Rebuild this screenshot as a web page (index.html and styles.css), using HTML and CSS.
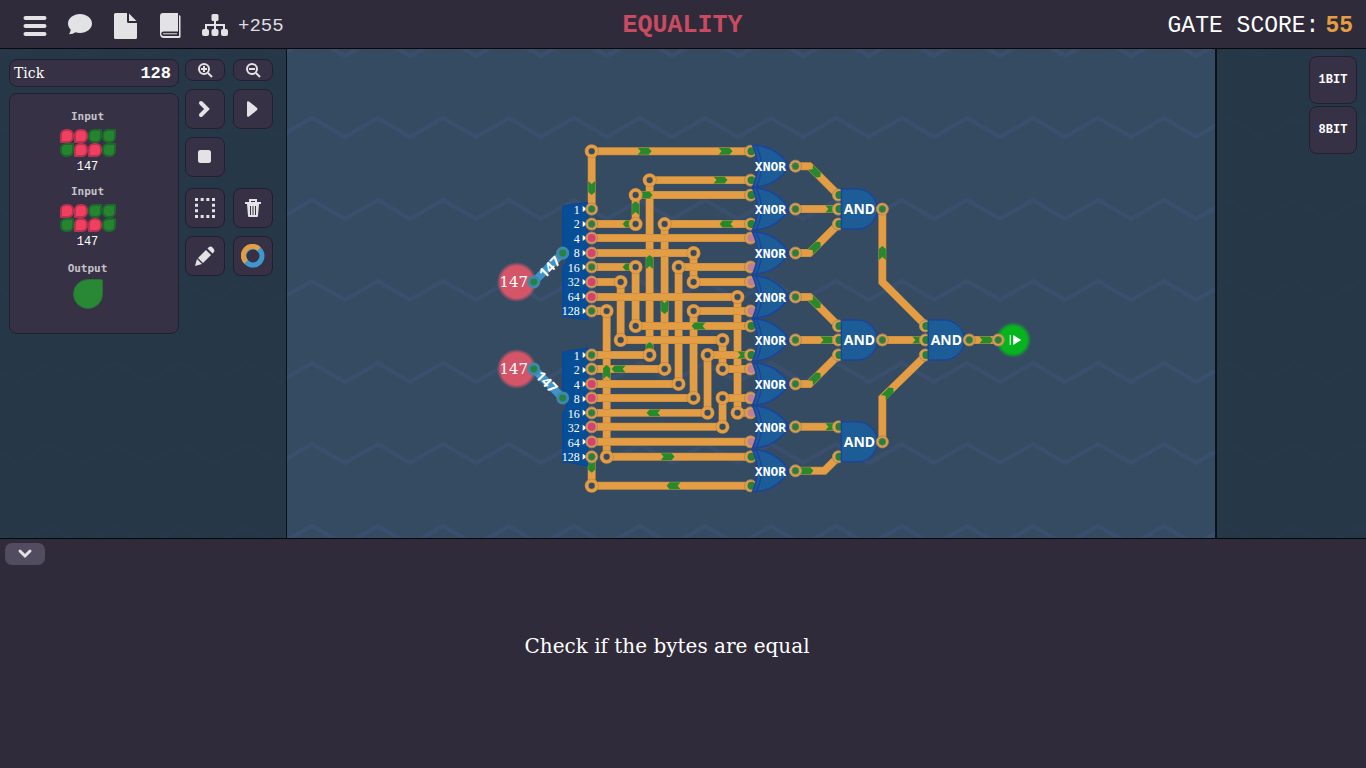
FILE: index.html
```html
<!DOCTYPE html>
<html lang="en">
<head>
<meta charset="utf-8">
<title>Equality</title>
<link rel="stylesheet" href="styles.css">
</head>
<body>
<header class="topbar">
  <nav class="menu" aria-label="Main">
    <button class="menu-btn" aria-label="Menu"><svg width="26" height="28" viewBox="0 0 26 28"><path d="M3.500 6h19M3.500 14h19M3.500 22h19" stroke="currentColor" stroke-width="4" stroke-linecap="round"/></svg></button>
    <button class="menu-btn" aria-label="Comments"><svg width="26" height="28" viewBox="0 0 26 28"><path d="M13 2C6.400 2 1 6.300 1 11.500c0 2.300 1 4.300 2.700 6-.2 2-1 3.700-1.700 4.700 2.800 0 5-1 6.400-2 1.400.5 3 .8 4.600.8 6.600 0 12-4.300 12-9.500S19.600 2 13 2Z" fill="currentColor"/></svg></button>
    <button class="menu-btn" aria-label="New file"><svg width="26" height="28" viewBox="0 0 26 28"><path d="M2 2.500A1.500 1.500 0 0 1 3.500 1H15v8.500a1.500 1.500 0 0 0 1.500 1.500H25v14.500a1.500 1.500 0 0 1-1.500 1.500h-20A1.500 1.500 0 0 1 2 25.500ZM17 1.500 24.500 9H17Z" fill="currentColor"/></svg></button>
    <button class="menu-btn" aria-label="Manual"><svg width="26" height="28" viewBox="0 0 26 28"><path d="M6 1h15v18.500H6.500c-3 0-3 4.500 0 4.500H22V3l1.500 1v21.500L22 26H7c-3 0-4-2-4-4V4c0-2 1-3 3-3Z" fill="currentColor"/><path d="M6 21.800h14" stroke="currentColor"/></svg></button>
    <button class="menu-btn" aria-label="Components"><svg width="26" height="28" viewBox="0 0 26 28"><g fill="currentColor"><rect x="9.500" y="2" width="7" height="7" rx="1.500"/><rect x="0" y="17" width="7" height="7" rx="2"/><rect x="9.500" y="17" width="7" height="7" rx="2"/><rect x="19" y="17" width="7" height="7" rx="2"/></g><path d="M13 8v9M4 17v-4h18v4" fill="none" stroke="currentColor" stroke-width="2"/></svg></button>
    <span class="gain">+255</span>
  </nav>
  <h1 class="level">EQUALITY</h1>
  <p class="score">GATE SCORE:<strong>55</strong></p>
</header>

<main class="workspace">
  <svg class="waves" aria-hidden="true">
    <defs>
      <pattern id="zigzag" width="131" height="163" patternUnits="userSpaceOnUse" patternTransform="translate(50 56)">
        <path d="M-33 32 0 13 33 32 66 13 98 32 131 13 164 32M-33 114 0 95 33 114 66 95 98 114 131 95 164 114" fill="none" stroke="#394f6d" stroke-width="4"/>
      </pattern>
    </defs>
    <rect width="100%" height="100%" fill="url(#zigzag)"/>
  </svg>

  <aside class="side left">
    <div class="status">
      <div class="card tick"><span>Tick</span><output class="tick-value">128</output></div>
      <div class="card signals">
        <section class="signal">
          <h2>Input</h2>
          <div class="byte"><i class="on"></i><i class="on"></i><i></i><i></i><i></i><i class="on"></i><i class="on"></i><i></i></div>
          <p>147</p>
        </section>
        <section class="signal">
          <h2>Input</h2>
          <div class="byte"><i class="on"></i><i class="on"></i><i></i><i></i><i></i><i class="on"></i><i class="on"></i><i></i></div>
          <p>147</p>
        </section>
        <section class="signal out">
          <h2>Output</h2>
          <div class="drop"></div>
        </section>
      </div>
    </div>
    <div class="tools">
      <button class="card tool short" aria-label="Zoom in"><svg width="16" height="16" viewBox="0 0 16 16" fill="none" stroke="currentColor" stroke-width="2"><circle cx="7" cy="7" r="5"/><path d="m11 11 4 4M7 4v6M4 7h6"/></svg></button>
      <button class="card tool short" aria-label="Zoom out"><svg width="16" height="16" viewBox="0 0 16 16" fill="none" stroke="currentColor" stroke-width="2"><circle cx="7" cy="7" r="5"/><path d="m11 11 4 4M4 7h6"/></svg></button>
      <button class="card tool" aria-label="Step"><svg width="24" height="24" viewBox="0 0 24 24"><path d="m8 6 6 6-6 6" fill="none" stroke="currentColor" stroke-width="4" stroke-linecap="round"/></svg></button>
      <button class="card tool" aria-label="Run"><svg width="24" height="24" viewBox="0 0 24 24"><path d="M6 5.500Q6 3.500 8 4.500l7.500 6q2 1.500 0 3L8 19.500q-2 1-2-1Z" fill="currentColor"/></svg></button>
      <button class="card tool" aria-label="Stop"><svg width="24" height="24" viewBox="0 0 24 24"><rect x="5" y="5" width="13" height="13" rx="2.500" fill="currentColor"/></svg></button>
      <button class="card tool second" aria-label="Select area"><svg width="24" height="24" viewBox="0 0 24 24"><path d="M2 3.500h20M2 20.500h20M3.500 2v20M20.500 2v20" fill="none" stroke="currentColor" stroke-width="3" stroke-dasharray="3 2.670"/></svg></button>
      <button class="card tool third" aria-label="Delete"><svg width="24" height="24" viewBox="0 0 24 24"><path d="M9 6V4h6v2M4 7h16" fill="none" stroke="currentColor" stroke-width="2"/><path d="M6 8h12l-1 12q0 1-1 1H8q-1 0-1-1Z" fill="currentColor"/><path d="M9.500 10v9M12 10v9M14.500 10v9" stroke="#363144"/></svg></button>
      <button class="card tool" aria-label="Draw"><svg width="24" height="24" viewBox="0 0 24 24" fill="currentColor"><path d="M2 22 4 15l5 5Z"/><path d="m5 14 8-8 5 5-8 8Z"/><path d="m14.500 4.500 1-1q2-2 4.500.5t.5 4.500l-1 1Z"/></svg></button>
      <button class="card tool" aria-label="Wire colour"><svg width="24" height="24" viewBox="0 0 24 24" fill="none" stroke-width="5"><circle cx="12" cy="12" r="9" stroke="#3f97cf"/><path d="M5 18A9 9 0 0 1 18 5" stroke="#e39e45"/></svg></button>
    </div>
  </aside>

  <div class="board">
    <svg class="circuit" viewBox="-305 -102 929 489" role="img" aria-label="Equality circuit">
      <defs>
        <g id="joint"><circle r="5" fill="#344b62" stroke="#b98142" stroke-width="4"/><circle r="5" fill="none" stroke="#e39e45" stroke-width="3"/></g>
        <g id="low"><circle r="6" fill="#e39e45" stroke="#a58a60"/><circle r="3.500" fill="#2b7d3b" stroke="#6a8056"/></g>
        <g id="high"><circle r="6" fill="#dc9560" stroke="#a58a60"/><circle r="4" fill="#d4436b"/></g>
        <g id="in-low"><circle r="6" fill="#e39e45" stroke="#a58a60"/><circle cx="1" r="4" fill="#2b7d3b"/></g>
        <g id="in-high"><circle r="6" fill="#e39e45" stroke="#a58a60"/><circle cx="1" r="4" fill="#bd7f98"/></g>
        <path id="pulse" d="M-7-3.500-4 0-7 3.500H4L7 0 4-3.500H-7Z" fill="#268a2d"/>
        <g id="xnor" stroke="#1b449c" stroke-width="1.500">
          <path d="M161-21q23 0 37 21q-14 21-37 21 10-21 0-42Z" fill="#1c5d98"/>
          <path d="M165-20q10 20 0 40" fill="none"/>
          <circle cx="198" r="3" fill="#1b449c"/>
        </g>
        <path id="and" d="M250-20h16a20 20 0 0 1 0 40h-16Z" fill="#1c5d98" stroke="#1b449c" stroke-width="1.500"/>
        <g id="splitter">
          <path d="M-29-3-4-7V111L-29 107V58q4-4 4-10t-4-10Z" fill="#064f96" stroke="#0a43a5"/>
          <path d="M-9-3v6l4-3ZM-9 12v6l4-3ZM-9 26v6l4-3ZM-9 41v6l4-3ZM-9 55v6l4-3ZM-9 70v6l4-3ZM-9 84v6l4-3ZM-9 99v6l4-3Z" fill="#fff"/>
          <g class="pin">
            <text x="-12" y="5">1</text><text x="-12" y="19">2</text><text x="-12" y="34">4</text><text x="-12" y="48">8</text><text x="-12" y="63">16</text><text x="-12" y="77">32</text><text x="-12" y="92">64</text><text x="-12" y="106">128</text>
          </g>
        </g>
        <radialGradient id="glow-red"><stop offset=".8" stop-color="#d45568"/><stop offset="1" stop-color="#d45568" stop-opacity="0"/></radialGradient>
        <radialGradient id="glow-green"><stop offset=".75" stop-color="#06b51d"/><stop offset="1" stop-color="#06b51d" stop-opacity="0"/></radialGradient>
        <path id="down" d="M0 58V0M44 73V44M102 102V131M44 116V175M29 131V189M131 189V218M146 146V262M15 160V306M58 204V29M73 218V73M87 233V116M102 247V160M116 262V204M131 276V247M0 306V335"/>
        <path id="across" d="M0 0H160M0 73H44M44 44H160M0 87H160M0 102H102M102 131H160M0 116H44M44 175H160M0 131H29M29 189H131M131 218H160M0 146H146M146 262H160M0 160H15M15 306H160M0 204H58M58 29H160M0 218H73M73 73H160M0 233H87M87 116H160M0 247H102M102 160H160M0 262H116M116 204H160M0 276H131M131 247H160M0 291H160M0 335H160"/>
        <path id="outputs" d="M204 15H218L247 44M204 58H247M204 102H218L247 73M204 146H218L247 175M204 189H247M204 233H218L247 204M204 276H247M204 320H233L247 306M291 58V131L335 175M291 189H335M291 291V247L335 204M378 189H407"/>
      </defs>

      <!-- wires: each layer has a darker casing under it -->
      <g fill="none">
        <use href="#down" class="casing"/><use href="#down" class="wire"/>
        <use href="#across" class="casing"/><use href="#across" class="wire"/>
        <use href="#outputs" class="casing"/><use href="#outputs" class="wire"/>
      </g>

      <!-- signal pulses -->
      <use href="#pulse" x="53"/><use href="#pulse" x="134"/><use href="#pulse" x="129" y="29"/><use href="#pulse" x="54" y="44"/>
      <use href="#pulse" x="76" y="306"/><use href="#pulse" x="153" y="204"/><use href="#pulse" x="241" y="58"/><use href="#pulse" x="236" y="189"/>
      <use href="#pulse" x="241" y="276"/><use href="#pulse" x="215" y="320"/><use href="#pulse" x="328" y="189"/><use href="#pulse" x="395" y="189"/>
      <use href="#pulse" transform="translate(0 37) rotate(90)"/><use href="#pulse" transform="translate(73 156) rotate(90)"/><use href="#pulse" transform="translate(0 315) rotate(90)"/>
      <use href="#pulse" transform="translate(44 57) rotate(-90)"/><use href="#pulse" transform="translate(58 111) rotate(-90)"/><use href="#pulse" transform="translate(58 198) rotate(-90)"/>
      <use href="#pulse" transform="translate(15 221) rotate(-90)"/><use href="#pulse" transform="translate(291 102) rotate(-90)"/>
      <use href="#pulse" transform="translate(38 73) rotate(180)"/><use href="#pulse" transform="translate(135 73) rotate(180)"/><use href="#pulse" transform="translate(38 116) rotate(180)"/>
      <use href="#pulse" transform="translate(107 175) rotate(180)"/><use href="#pulse" transform="translate(27 218) rotate(180)"/><use href="#pulse" transform="translate(62 262) rotate(180)"/><use href="#pulse" transform="translate(82 335) rotate(180)"/>
      <use href="#pulse" transform="translate(224 21) rotate(45)"/><use href="#pulse" transform="translate(224 152) rotate(45)"/>
      <use href="#pulse" transform="translate(224 96) rotate(-45)"/><use href="#pulse" transform="translate(224 227) rotate(-45)"/><use href="#pulse" transform="translate(297 242) rotate(-45)"/>

      <!-- corners -->
      <use href="#joint"/><use href="#joint" x="58" y="29"/><use href="#joint" x="44" y="44"/><use href="#joint" x="44" y="73"/><use href="#joint" x="73" y="73"/>
      <use href="#joint" x="102" y="102"/><use href="#joint" x="44" y="116"/><use href="#joint" x="87" y="116"/><use href="#joint" x="29" y="131"/><use href="#joint" x="102" y="131"/>
      <use href="#joint" x="146" y="146"/><use href="#joint" x="15" y="160"/><use href="#joint" x="102" y="160"/><use href="#joint" x="44" y="175"/><use href="#joint" x="29" y="189"/>
      <use href="#joint" x="131" y="189"/><use href="#joint" x="58" y="204"/><use href="#joint" x="116" y="204"/><use href="#joint" x="73" y="218"/><use href="#joint" x="131" y="218"/>
      <use href="#joint" x="87" y="233"/><use href="#joint" x="102" y="247"/><use href="#joint" x="131" y="247"/><use href="#joint" x="116" y="262"/><use href="#joint" x="146" y="262"/>
      <use href="#joint" x="131" y="276"/><use href="#joint" x="15" y="306"/><use href="#joint" y="335"/>

      <!-- byte splitters -->
      <use href="#splitter" y="58"/>
      <use href="#splitter" y="204"/>
      <use href="#low" y="58"/><use href="#low" y="73"/><use href="#high" y="87"/><use href="#high" y="102"/><use href="#low" y="116"/><use href="#high" y="131"/><use href="#high" y="146"/><use href="#low" y="160"/>
      <use href="#low" y="204"/><use href="#low" y="218"/><use href="#high" y="233"/><use href="#high" y="247"/><use href="#low" y="262"/><use href="#high" y="276"/><use href="#high" y="291"/><use href="#low" y="306"/>

      <!-- gate input pins -->
      <use href="#in-low" x="159"/><use href="#in-low" x="159" y="29"/><use href="#in-low" x="159" y="44"/><use href="#in-low" x="159" y="73"/>
      <use href="#in-high" x="159" y="87"/><use href="#in-high" x="159" y="116"/><use href="#in-high" x="159" y="131"/><use href="#in-high" x="159" y="160"/>
      <use href="#in-low" x="159" y="175"/><use href="#in-low" x="159" y="204"/><use href="#in-high" x="159" y="218"/><use href="#in-high" x="159" y="247"/>
      <use href="#in-high" x="159" y="262"/><use href="#in-high" x="159" y="291"/><use href="#in-low" x="159" y="306"/><use href="#in-low" x="159" y="335"/>
      <use href="#in-low" x="247" y="44"/><use href="#in-low" x="247" y="58"/><use href="#in-low" x="247" y="73"/>
      <use href="#in-low" x="247" y="175"/><use href="#in-low" x="247" y="189"/><use href="#in-low" x="247" y="204"/>
      <use href="#in-low" x="247" y="276"/><use href="#in-low" x="247" y="306"/>
      <use href="#in-low" x="334" y="175"/><use href="#in-low" x="334" y="189"/><use href="#in-low" x="334" y="204"/>

      <!-- gates -->
      <use href="#xnor" y="15"/><use href="#xnor" y="58"/><use href="#xnor" y="102"/><use href="#xnor" y="146"/>
      <use href="#xnor" y="189"/><use href="#xnor" y="233"/><use href="#xnor" y="276"/><use href="#xnor" y="320"/>
      <use href="#and" y="58"/><use href="#and" y="189"/><use href="#and" y="291"/><use href="#and" x="87" y="189"/>

      <!-- gate output pins -->
      <use href="#low" x="204" y="15"/><use href="#low" x="204" y="58"/><use href="#low" x="204" y="102"/><use href="#low" x="204" y="146"/>
      <use href="#low" x="204" y="189"/><use href="#low" x="204" y="233"/><use href="#low" x="204" y="276"/><use href="#low" x="204" y="320"/>
      <use href="#low" x="291" y="58"/><use href="#low" x="291" y="189"/><use href="#low" x="291" y="291"/><use href="#low" x="378" y="189"/>

      <g class="xnor-label">
        <text x="179" y="20">XNOR</text><text x="179" y="63">XNOR</text><text x="179" y="107">XNOR</text><text x="179" y="151">XNOR</text>
        <text x="179" y="194">XNOR</text><text x="179" y="238">XNOR</text><text x="179" y="281">XNOR</text><text x="179" y="325">XNOR</text>
      </g>
      <g class="and-label">
        <text x="268" y="63">AND</text><text x="268" y="194">AND</text><text x="268" y="296">AND</text><text x="355" y="194">AND</text>
      </g>

      <!-- byte inputs -->
      <circle cx="-75" cy="131" r="20" fill="url(#glow-red)"/>
      <circle cx="-75" cy="218" r="20" fill="url(#glow-red)"/>
      <path d="M-58 131-29 102M-58 218-29 247" stroke="#3f93cb" stroke-width="8"/>
      <g class="bus-label">
        <text transform="translate(-42 116) rotate(-45)" y="5">147</text>
        <text transform="translate(-45 231) rotate(45)" y="5">147</text>
      </g>
      <g fill="#278043" stroke="#3f88ab" stroke-width="3">
        <circle cx="-58" cy="131" r="5"/><circle cx="-29" cy="102" r="5"/><circle cx="-58" cy="218" r="5"/><circle cx="-29" cy="247" r="5"/>
      </g>
      <g class="value-label"><text x="-78" y="136">147</text><text x="-78" y="223">147</text></g>

      <!-- output -->
      <circle cx="422" cy="189" r="18" fill="url(#glow-green)"/>
      <use href="#low" x="407" y="189"/>
      <path d="M422 184v10l8-5Z" fill="#fff"/><path d="M419 184v10" stroke="#fff"/>
    </svg>
  </div>

  <aside class="side right">
    <button class="card part">1BIT</button>
    <button class="card part">8BIT</button>
  </aside>
</main>

<section class="brief">
  <button class="collapse" aria-label="Collapse"><svg width="18" height="12" viewBox="0 0 18 12"><path d="m4 3 5 5 5-5" fill="none" stroke="currentColor" stroke-width="3" stroke-linecap="round"/></svg></button>
  <p class="brief-text">Check if the bytes are equal</p>
</section>
</body>
</html>
```
FILE: styles.css
```css
* { box-sizing: border-box; }
body {
  margin: 0;
  min-height: 100vh;
  display: flex;
  flex-direction: column;
  background: #2f2b3b;
  color: #fff;
  font-family: "Liberation Mono", monospace;
}
h1, h2, p { margin: 0; }
button { padding: 0; border: 0; background: none; color: #e3e3e5; font: inherit; cursor: pointer; }
svg { display: block; }

.topbar {
  display: grid;
  grid-template-columns: 1fr auto 1fr;
  align-items: center;
  min-height: 49px;
  padding: 3px 13px 0 12px;
  border-bottom: 1px solid #07070c;
}
.menu { display: flex; align-items: center; }
.menu-btn { width: 45px; height: 44px; display: grid; place-items: center; }
.gain { margin-left: 1px; font-size: 19px; color: #dedee0; }
.level { font-size: 25px; line-height: 45px; color: #ca4b61; }
.score { justify-self: end; display: flex; gap: 6px; font-size: 23px; }
.score strong { color: #e39e45; }

.workspace {
  flex: 1;
  position: relative;
  display: grid;
  grid-template-columns: 287px 1fr 151px;
  background: #344b62;
}
.waves { position: absolute; width: 100%; height: 100%; }
.side { position: relative; background: rgba(34, 48, 63, .75); }
.left {
  display: flex;
  align-items: flex-start;
  gap: 6px;
  padding: 10px 9px;
  border-right: 1px solid #0b111b;
}
.right {
  display: flex;
  flex-direction: column;
  align-items: flex-end;
  gap: 2px;
  padding: 7px 9px;
  border-left: 2px solid #0b111b;
}
.card { background: #363144; border: 1px solid #231f30; border-radius: 8px; }
.status { width: 170px; display: grid; gap: 6px; }
.tick {
  display: flex;
  justify-content: space-between;
  align-items: center;
  height: 28px;
  padding: 0 7px 0 4px;
  font-family: "DejaVu Serif", serif;
  font-size: 14px;
}
.tick-value { font: bold 17px "Liberation Mono", monospace; }
.signals {
  display: grid;
  gap: 10px;
  min-height: 241px;
  align-content: start;
  justify-items: center;
  padding: 16px 13px 24px 0;
}
.signal { display: grid; justify-items: center; row-gap: 2px; }
.signal h2 { font: bold 11px/14px "DejaVu Sans Mono", monospace; color: #c5c3c9; }
.signal p { font: 12px/16px "Liberation Mono", monospace; }
.out { padding-top: 2px; }
.byte { display: grid; grid-template-columns: repeat(4, 14px); margin-top: 3px; }
.byte i { height: 14px; background: #25842f; border: 2px solid #20672e; border-radius: 6px 1px 6px 6px; }
.byte .on { background: #f03f60; border-color: #b9334f; border-radius: 6px 6px 6px 1px; }
.drop { width: 30px; height: 30px; margin-top: 1px; background: #288834; border: 1px solid #2b6f37; border-radius: 50% 2px 50% 50%; }

.tools { display: grid; grid-template-columns: 40px 40px; gap: 8px; }
.tool { height: 40px; display: grid; place-items: center; }
.short { height: 22px; }
.second, .third { margin-top: 3px; }
.second { grid-column: 1; }

.board { position: relative; min-width: 0; display: grid; }
.circuit { width: 100%; height: 100%; }
.casing { stroke: #c0843b; stroke-width: 8; }
.wire { stroke: #e39e45; stroke-width: 7; }
.circuit text { fill: #fff; }
.pin { font: 12px "Liberation Serif", serif; text-anchor: end; }
.xnor-label { font: bold 13px "DejaVu Sans Mono", monospace; text-anchor: middle; }
.and-label { font: bold 14px "Noto Sans", sans-serif; text-anchor: middle; }
.bus-label { font: bold 14px "Noto Sans", sans-serif; text-anchor: middle; }
.value-label { font: 15px "DejaVu Serif", serif; text-anchor: middle; }

.part { width: 48px; height: 48px; color: #fff; font-size: 12px; font-weight: bold; }

.brief { min-height: 230px; padding: 4px 5px; border-top: 1px solid #07070c; display: flex; flex-direction: column; }
.collapse { width: 40px; height: 22px; display: grid; place-items: center; background: #514c60; border-radius: 7px; }
.brief-text {
  flex: 1;
  padding: 66px 32px 0 0;
  text-align: center;
  font: 20px/30px "DejaVu Serif", serif;
}
```
